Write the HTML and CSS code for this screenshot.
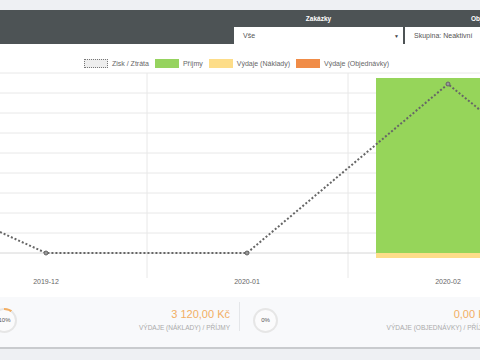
FILE: index.html
```html
<!DOCTYPE html>
<html lang="cs">
<head>
  <meta charset="UTF-8">
  <meta name="viewport" content="width=device-width, initial-scale=1.0">
  <title>Přehled nákladů</title>
  <link rel="stylesheet" href="styles.css">
</head>
<body>
  <div class="topbar"></div>

  <header class="filters">
    <div class="filter">
      <div class="filter-label">Zakázky</div>
      <div class="filter-select"><span>Vše</span><span class="caret">&#9660;</span></div>
    </div>
    <div class="filter">
      <div class="filter-label">Objednávky</div>
      <div class="filter-select"><span>Skupina: Neaktivní</span></div>
    </div>
  </header>

  <section class="chart">
    <ul class="legend">
      <li><span class="swatch swatch-line"></span>Zisk / Ztráta</li>
      <li><span class="swatch swatch-income"></span>Příjmy</li>
      <li><span class="swatch swatch-costs"></span>Výdaje (Náklady)</li>
      <li><span class="swatch swatch-orders"></span>Výdaje (Objednávky)</li>
    </ul>
    <svg class="plot" width="480" height="227" viewBox="0 0 480 227">
      <g class="grid">
        <line x1="0" y1="3" x2="480" y2="3"></line>
        <line x1="0" y1="23" x2="480" y2="23"></line>
        <line x1="0" y1="43" x2="480" y2="43"></line>
        <line x1="0" y1="63" x2="480" y2="63"></line>
        <line x1="0" y1="83" x2="480" y2="83"></line>
        <line x1="0" y1="103" x2="480" y2="103"></line>
        <line x1="0" y1="123" x2="480" y2="123"></line>
        <line x1="0" y1="143" x2="480" y2="143"></line>
        <line x1="0" y1="163" x2="480" y2="163"></line>
        <line x1="147" y1="3" x2="147" y2="208"></line>
        <line x1="348" y1="3" x2="348" y2="208"></line>
      </g>
      <line class="zero" x1="0" y1="183" x2="480" y2="183"></line>
      <rect class="bar-income" x="376" y="8" width="144" height="175"></rect>
      <rect class="bar-costs" x="376" y="183" width="144" height="5"></rect>
      <polyline class="profit" points="0,162 46,183 247,183 448,14 480,40"></polyline>
      <circle class="point" cx="46" cy="183" r="2"></circle>
      <circle class="point" cx="247" cy="183" r="2"></circle>
      <circle class="point" cx="448" cy="14" r="2"></circle>
      <text class="tick" x="46" y="214">2019-12</text>
      <text class="tick" x="247" y="214">2020-01</text>
      <text class="tick" x="448" y="214">2020-02</text>
    </svg>
  </section>

  <section class="stats-wrap">
    <div class="stats">
      <div class="stat">
        <div class="ring ring-10"><span class="ring-inner">10%</span></div>
        <div class="stat-values">
          <div class="stat-amount">3 120,00 Kč</div>
          <div class="stat-label">Výdaje (náklady) / příjmy</div>
        </div>
      </div>
      <div class="stat">
        <div class="ring"><span class="ring-inner">0%</span></div>
        <div class="stat-values">
          <div class="stat-amount">0,00 Kč</div>
          <div class="stat-label">Výdaje (objednávky) / příjmy</div>
        </div>
      </div>
    </div>
  </section>
  <div class="footer-line"></div>
</body>
</html>
```

FILE: styles.css
```css
body {
  margin: 0;
  width: 480px;
  height: 360px;
  overflow: hidden;
  background: #eef0f3;
  font-family: "Liberation Sans", Arial, sans-serif;
}

.topbar {
  height: 10px;
}

.filters {
  height: 34px;
  background: #4d5355;
  display: flex;
  gap: 2px;
  padding-left: 234px;
  overflow: hidden;
}

.filter {
  flex: 0 0 169px;
  display: flex;
  flex-direction: column;
}

.filter-label {
  height: 17px;
  line-height: 17px;
  text-align: center;
  color: #fff;
  font-weight: bold;
  font-size: 6.5px;
}

.filter-select {
  height: 17px;
  background: #fff;
  display: flex;
  align-items: center;
  justify-content: space-between;
  padding: 0 4px 0 9px;
  font-size: 7px;
  color: #555;
}

.caret {
  font-size: 5px;
  color: #444;
}

.chart {
  height: 253px;
  background: #fff;
}

.legend {
  margin: 0;
  list-style: none;
  height: 26px;
  box-sizing: border-box;
  padding: 15px 7px 0 0;
  display: flex;
  justify-content: center;
  align-items: flex-start;
  gap: 6px;
  font-size: 7px;
  color: #666;
}

.legend li {
  display: flex;
  align-items: center;
  gap: 4px;
  line-height: 9px;
}

.swatch {
  width: 24px;
  height: 9px;
  box-sizing: border-box;
}

.swatch-line {
  border: 1.5px dotted #777;
  background: #eee;
}

.swatch-income {
  background: #96d35f;
}

.swatch-costs {
  background: #fddd89;
}

.swatch-orders {
  background: #f08c47;
}

.plot {
  display: block;
}

.grid line {
  stroke: #e8e8e8;
  stroke-width: 1;
}

.zero {
  stroke: #d6d6d6;
  stroke-width: 1;
}

.bar-income {
  fill: #96d55a;
}

.bar-costs {
  fill: #fddd89;
}

.profit {
  fill: none;
  stroke: #666;
  stroke-width: 2;
  stroke-dasharray: 2 2;
}

.point {
  fill: #999;
  stroke: #666;
  stroke-width: 1;
}

.tick {
  font-family: "Liberation Sans", Arial, sans-serif;
  font-size: 7px;
  fill: #666;
  text-anchor: middle;
}

.stats-wrap {
  height: 50px;
  background: #f8f9fb;
  overflow: hidden;
}

.stats {
  display: flex;
  margin-left: -21px;
}

.stat {
  flex: 0 0 261px;
  box-sizing: border-box;
  height: 29px;
  margin: 5px 0 16px;
  padding: 0 9px 0 13px;
  display: flex;
  align-items: center;
  justify-content: space-between;
  border-right: 1px solid #e4e6e9;
}

.ring {
  width: 25px;
  height: 25px;
  margin-top: 7px;
  border-radius: 50%;
  background: #e6e6e6;
  display: flex;
  align-items: center;
  justify-content: center;
}

.ring-10 {
  background: conic-gradient(#f2ae63 0 10%, #e6e6e6 0);
}

.ring-inner {
  width: 21px;
  height: 21px;
  border-radius: 50%;
  background: #fbfbfc;
  display: flex;
  align-items: center;
  justify-content: center;
  font-size: 6px;
  color: #555;
}

.stat-values {
  margin-top: 6px;
  text-align: right;
}

.stat-amount {
  font-size: 11px;
  line-height: 13px;
  color: #f2ae63;
}

.stat-label {
  margin-top: 2px;
  font-size: 6.5px;
  line-height: 9px;
  color: #aaa;
  text-transform: uppercase;
}

.footer-line {
  height: 2px;
  background: #c9cbce;
}
```
